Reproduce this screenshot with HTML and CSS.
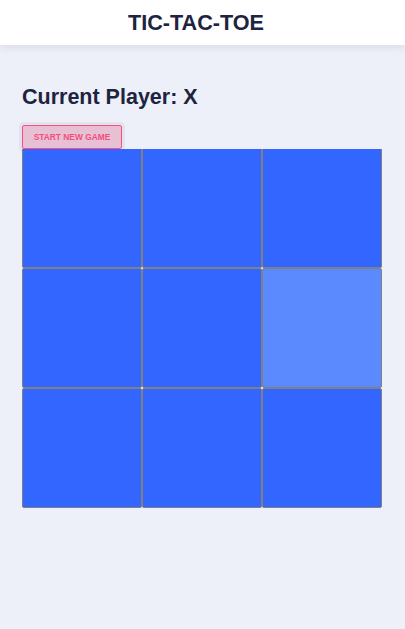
FILE: index.html
```html
<!DOCTYPE html>
<html lang="en">
<head>
<meta charset="utf-8">
<title>Tic-Tac-Toe</title>
<link rel="stylesheet" href="styles.css">
</head>
<body>
<header class="topbar">
  <h1 class="title">TIC-TAC-TOE</h1>
</header>
<main class="game">
  <h2 class="status">Current Player: X</h2>
  <div class="controls">
    <button class="new-game">START NEW GAME</button>
  </div>
  <div class="board">
    <button class="cell"></button>
    <button class="cell"></button>
    <button class="cell"></button>
    <button class="cell"></button>
    <button class="cell"></button>
    <button class="cell cell-hover"></button>
    <button class="cell"></button>
    <button class="cell"></button>
    <button class="cell"></button>
  </div>
</main>
</body>
</html>
```

FILE: styles.css
```css
html, body {
  margin: 0;
  padding: 0;
}
body {
  background: #edf0f8;
  font-family: "Liberation Sans", Arial, sans-serif;
  color: #1e2340;
  min-height: 629px;
}
.topbar {
  height: 45px;
  background: #ffffff;
  box-shadow: 0 2px 8px rgba(30, 40, 80, 0.10);
  display: flex;
  align-items: center;
  justify-content: center;
  padding-right: 13px;
}
.title {
  margin: 0;
  font-size: 21.6px;
  font-weight: 700;
  line-height: 1;
  color: #1e2340;
}
.game {
  padding: 40px 22px 0 22px;
}
.status {
  margin: 0;
  font-size: 21.5px;
  font-weight: 700;
  line-height: 24px;
  color: #1e2340;
}
.controls {
  margin-top: 16px;
  height: 24px;
}
.new-game {
  display: block;
  width: 100px;
  height: 24px;
  margin: 0;
  padding: 0;
  background: #e8c0d3;
  border: 1px solid #ff4d80;
  border-radius: 2px;
  box-shadow: 0 0 0 3px #e1e4ee;
  color: #f24f7c;
  font-family: "Liberation Sans", Arial, sans-serif;
  font-size: 8.4px;
  font-weight: 700;
  letter-spacing: 0;
  cursor: pointer;
}
.board {
  display: grid;
  grid-template-columns: repeat(3, 120px);
  grid-template-rows: 119px 120px 120px;
  width: 360px;
  margin: 0;
}
.cell {
  margin: 0;
  padding: 0;
  background: #3366ff;
  border: 1px solid #808080;
  border-radius: 2px;
  cursor: pointer;
}
.cell:nth-child(-n+3) {
  border-top: 0;
  border-top-left-radius: 0;
  border-top-right-radius: 0;
}
.cell-hover {
  background: #5b8aff;
}
```
